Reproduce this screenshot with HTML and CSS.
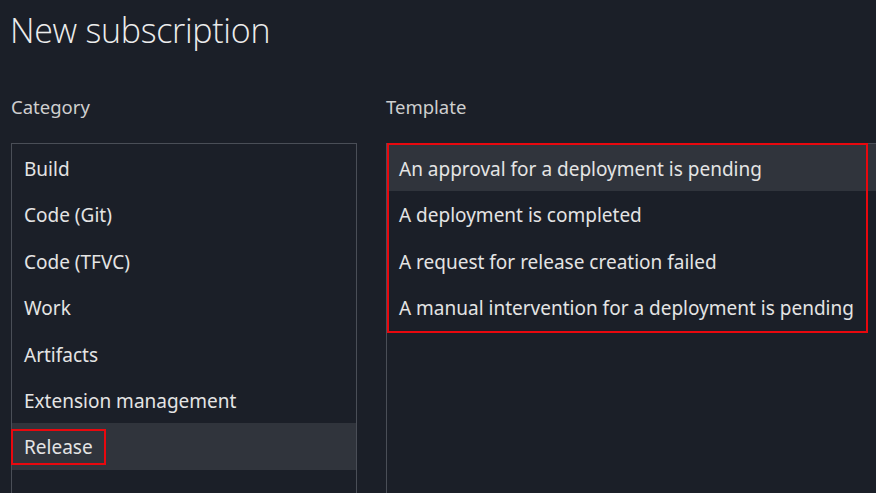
FILE: index.html
```html
<!DOCTYPE html>
<html lang="en">
<head>
<meta charset="utf-8">
<title>New subscription</title>
<link rel="stylesheet" href="styles.css">
</head>
<body>
<div class="page">
  <h1 class="title">New subscription</h1>
  <div class="columns">
    <section class="col col-category">
      <h2 class="col-label">Category</h2>
      <div class="listbox">
        <div class="row">Build</div>
        <div class="row">Code (Git)</div>
        <div class="row">Code (TFVC)</div>
        <div class="row">Work</div>
        <div class="row">Artifacts</div>
        <div class="row">Extension management</div>
        <div class="row selected"><span class="mark">Release</span></div>
      </div>
    </section>
    <section class="col col-template">
      <h2 class="col-label">Template</h2>
      <div class="listbox listbox-wide">
        <div class="template-group">
          <div class="row selected">An approval for a deployment is pending</div>
          <div class="row">A deployment is completed</div>
          <div class="row">A request for release creation failed</div>
          <div class="row">A manual intervention for a deployment is pending</div>
        </div>
      </div>
    </section>
  </div>
</div>
</body>
</html>
```
FILE: styles.css
```css
* { box-sizing: border-box; }
html, body {
  margin: 0;
  padding: 0;
  background: #1b1f28;
  overflow: hidden;
}
body {
  font-family: "Noto Sans", "Open Sans", sans-serif;
  color: #e4e4e4;
  width: 876px;
  height: 493px;
}
.page {
  padding: 0 0 0 10px;
}
.title {
  margin: 0;
  padding-top: 9px;
  font-family: "Open Sans", "Noto Sans", sans-serif;
  font-weight: 300;
  font-size: 34px;
  line-height: 42px;
  height: 90px;
  color: #ececec;
  letter-spacing: -0.3px;
}
.columns {
  display: flex;
  gap: 29px;
  padding-left: 1px;
}
.col-label {
  margin: 0;
  font-weight: 400;
  font-size: 18.5px;
  line-height: 34px;
  height: 53px;
  color: #cfcfcf;
}
.col-category { width: 346px; flex: none; }
.col-template { flex: 1; min-width: 0; }
.listbox {
  border: 1px solid #4a4e57;
  border-bottom: none;
  height: 350px;
}
.listbox-wide {
  border-right: none;
}
.row {
  height: 46.5px;
  display: flex;
  align-items: center;
  padding: 3px 0 0 12px;
  font-size: 19px;
  white-space: nowrap;
}
.row.selected {
  background: #30343c;
}
.mark {
  display: inline-block;
  margin-left: -13px;
  margin-top: -2px;
  padding: 0 11px 0 11px;
  border: 2px solid #e8080e;
  line-height: 32px;
}
.template-group {
  position: relative;
}
.template-group::after {
  content: "";
  position: absolute;
  left: 0;
  top: -1px;
  width: 477px;
  height: 186px;
  border: 2px solid #e8080e;
  pointer-events: none;
}
```
